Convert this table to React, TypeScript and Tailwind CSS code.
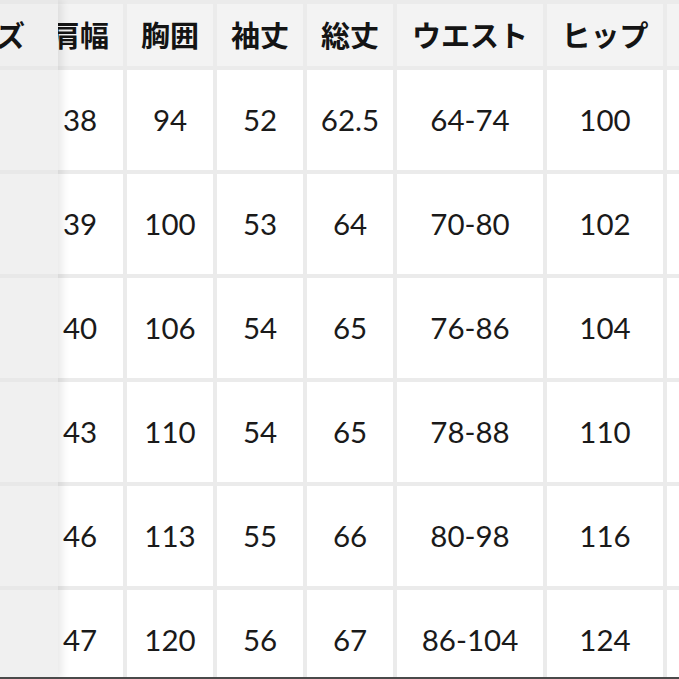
const headers = ["肩幅", "胸囲", "袖丈", "総丈", "ウエスト", "ヒップ", ""];

const rows = [
  ["38", "94", "52", "62.5", "64-74", "100", ""],
  ["39", "100", "53", "64", "70-80", "102", ""],
  ["40", "106", "54", "65", "76-86", "104", ""],
  ["43", "110", "54", "65", "78-88", "110", ""],
  ["46", "113", "55", "66", "80-98", "116", ""],
  ["47", "120", "56", "67", "86-104", "124", ""],
];

export default function App() {
  return (
    <div className="relative w-[679px] h-[679px] overflow-hidden bg-white">
      {/* Scrolled part of the size table */}
      <div className="ml-[37px] w-[760px] pt-[4px] bg-[#ebebeb]">
        <div className="grid grid-cols-[86px_86px_86px_86px_146px_116px_116px] gap-[4px]">
          {headers.map((h, i) => (
            <div
              key={"h" + i}
              className="h-[62px] bg-[#f3f3f3] flex items-center justify-center text-[29px] font-bold text-[#141414] whitespace-nowrap"
              style={{ fontFamily: '"Noto Sans CJK JP", "Noto Sans", sans-serif' }}
            >
              {h}
            </div>
          ))}
          {rows.map((r, ri) =>
            r.map((v, ci) => (
              <div
                key={ri + "-" + ci}
                className="h-[100px] bg-white flex items-center justify-center text-[29.5px] text-[#1a1a1a]"
                style={{ fontFamily: 'Lato, "Open Sans", sans-serif' }}
              >
                {v}
              </div>
            ))
          )}
        </div>
      </div>

      {/* Sticky size column lying over the scrolled columns */}
      <div className="absolute left-0 top-0 w-[58px] h-full pt-[4px] bg-[#e8e8e8] shadow-[4px_0_8px_rgba(0,0,0,0.09)] overflow-hidden">
        <div className="flex flex-col gap-[4px]">
          <div
            className="h-[62px] bg-[#efefef] flex items-center justify-end pr-[33px] text-[29px] font-bold text-[#141414] whitespace-nowrap"
            style={{ fontFamily: '"Noto Sans CJK JP", "Noto Sans", sans-serif' }}
          >
            サイズ
          </div>
          {rows.map((_, i) => (
            <div key={"s" + i} className="h-[100px] bg-[#f0f0f0]" />
          ))}
        </div>
      </div>

      {/* Bottom edge of the photo */}
      <div className="absolute left-0 bottom-0 w-full h-[2px] bg-[#4a4a4a]" />
    </div>
  );
}
